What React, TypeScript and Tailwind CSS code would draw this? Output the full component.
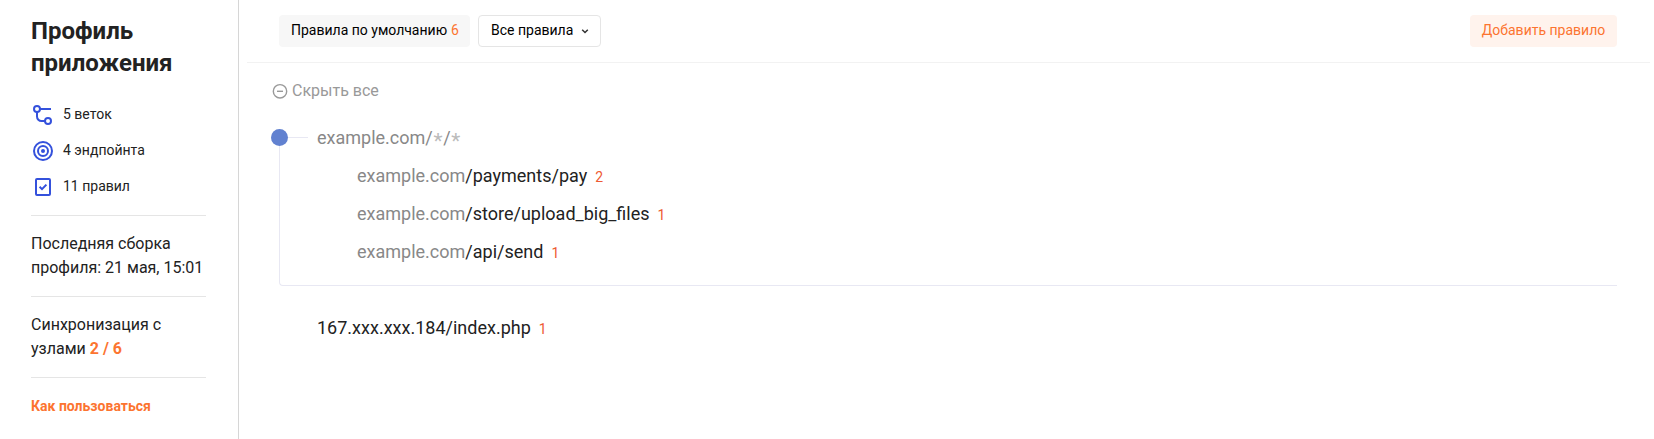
import React from "react";

const branches = [
  { path: "/payments/pay", count: 2 },
  { path: "/store/upload_big_files", count: 1 },
  { path: "/api/send", count: 1 },
];

function BranchIcon() {
  return (
    <svg width="24" height="24" viewBox="0 0 24 24" fill="none" stroke="#3451dc" strokeWidth="2">
      <circle cx="6" cy="6" r="3" />
      <path d="M9 6h11M6 9v4.5a4.5 4.5 0 0 0 4.5 4.5H14" />
      <circle cx="17" cy="18" r="3" />
    </svg>
  );
}

function TargetIcon() {
  return (
    <svg width="24" height="24" viewBox="0 0 24 24" fill="none" stroke="#3451dc" strokeWidth="2">
      <circle cx="12" cy="12" r="9" />
      <circle cx="12" cy="12" r="5" />
      <circle cx="12" cy="12" r="2" fill="#3451dc" stroke="none" />
    </svg>
  );
}

function RuleIcon() {
  return (
    <svg width="24" height="24" viewBox="0 0 24 24" fill="none" stroke="#3451dc" strokeWidth="2">
      <rect x="5" y="4" width="14" height="16" rx="1" />
      <path d="M8.6 11.8l2.4 2.3 4.4-4.5" />
    </svg>
  );
}

function Stat({ icon, label }: { icon: React.ReactNode; label: string }) {
  return (
    <li className="flex h-9 items-center gap-2">
      {icon}
      <span className="pb-0.5 text-sm leading-5">{label}</span>
    </li>
  );
}

function Sidebar() {
  return (
    <aside className="w-[239px] shrink-0 border-r border-[#d6d6d6] pl-[31px] pr-8 pt-[15px]">
      <h1 className="text-2xl font-bold leading-8">
        Профиль
        <br />
        приложения
      </h1>
      <ul className="mt-[18px]">
        <Stat icon={<BranchIcon />} label="5 веток" />
        <Stat icon={<TargetIcon />} label="4 эндпойнта" />
        <Stat icon={<RuleIcon />} label="11 правил" />
      </ul>
      <p className="mt-[10px] h-[81px] whitespace-nowrap border-t border-[#e5e5e5] pt-4 text-base leading-6">
        Последняя сборка
        <br />
        профиля: 21 мая, 15:01
      </p>
      <p className="h-[81px] border-t border-[#e5e5e5] pt-4 text-base leading-6">
        Синхронизация с
        <br />
        узлами <b className="font-bold text-[#fc7430]">2 / 6</b>
      </p>
      <div className="border-t border-[#e5e5e5] pt-[18px]">
        <a className="block text-sm font-bold leading-5 text-[#fc7430]">Как пользоваться</a>
      </div>
    </aside>
  );
}

function Toolbar() {
  return (
    <header className="ml-2 mr-1 flex h-[63px] items-start border-b border-[#f2f2f2] pl-8 pr-[33px] pt-[15px] text-sm leading-5">
      <button className="flex h-8 w-[191px] items-center gap-1 whitespace-nowrap rounded bg-[#f7f7f7] pb-0.5 pl-3 text-black">
        Правила по умолчанию <span className="text-[#fc7430]">6</span>
      </button>
      <button className="ml-2 flex h-8 w-[123px] items-center whitespace-nowrap rounded border border-[#e5e5e5] pl-3 text-black">
        <span className="pb-0.5">Все правила</span>
        <svg className="ml-2" width="8" height="8" viewBox="0 0 8 8" fill="none" stroke="#333" strokeWidth="1.5">
          <path d="M1.2 2.7L4 5.5l2.8-2.8" />
        </svg>
      </button>
      <button className="ml-auto h-8 w-[147px] whitespace-nowrap rounded bg-[#fff3ed] pb-0.5 text-[#fc7430]">
        Добавить правило
      </button>
    </header>
  );
}

function Count({ value }: { value: number }) {
  return <span className="ml-2 text-sm text-[#ee5a33]">{value}</span>;
}

function Wildcard() {
  return <span className="px-[0.7px] align-[-4px] text-[21px] leading-none text-[#bbb]">*</span>;
}

function Tree() {
  return (
    <section>
      <button className="ml-[33px] mt-4 flex h-6 items-center gap-1 text-base text-[#999]">
        <svg width="16" height="16" viewBox="0 0 16 16" fill="none" stroke="#999" strokeWidth="1.4">
          <circle cx="8" cy="8.3" r="6.7" />
          <path d="M5 8.3h6" />
        </svg>
        Скрыть все
      </button>
      <div className="mt-4 pl-8 pr-[37px] text-lg leading-[27px]">
        <div className="flex h-[38px] items-center pb-px">
          <span className="h-[17px] w-[17px] rounded-full bg-[#6181d0]" />
          <span className="h-px w-5 bg-[#e8e8f3]" />
          <span className="ml-[9px] h-[27px] text-[#888]">
            example.com/<Wildcard />/<Wildcard />
          </span>
        </div>
        <ul className="-mt-[11px] ml-2 h-[140px] rounded-bl border-b border-l border-[#e8e8f3] pl-[77px] pt-[11px]">
          {branches.map(({ path, count }) => (
            <li key={path} className="flex h-[38px] items-center pb-px">
              <span className="whitespace-nowrap">
                <span className="text-[#888]">example.com</span>
                {path}
                <Count value={count} />
              </span>
            </li>
          ))}
        </ul>
        <div className="mt-[23px] flex h-[38px] items-center pb-px pl-[46px]">
          <span>
            167.xxx.xxx.184/index.php
            <Count value={1} />
          </span>
        </div>
      </div>
    </section>
  );
}

export default function App() {
  return (
    <div className="flex h-screen overflow-hidden bg-white font-['Roboto',sans-serif] text-[#222]">
      <Sidebar />
      <main className="min-w-0 flex-1">
        <Toolbar />
        <Tree />
      </main>
    </div>
  );
}
